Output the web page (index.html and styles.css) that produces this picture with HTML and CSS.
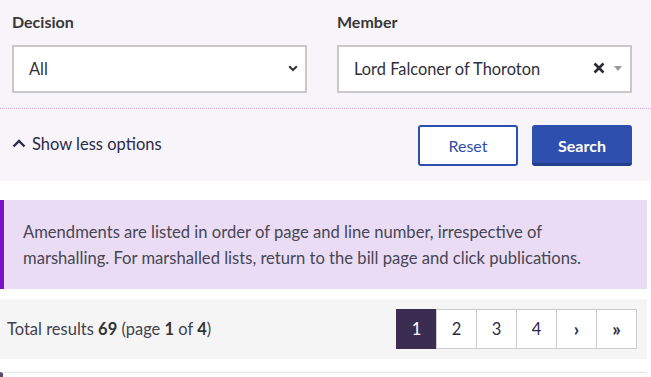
FILE: index.html
```html
<!DOCTYPE html>
<html lang="en">
<head>
<meta charset="utf-8">
<title>Amendments search</title>
<link rel="stylesheet" href="styles.css">
</head>
<body>
<section class="filters">
  <div class="fields">
    <div class="field">
      <div class="label">Decision</div>
      <div class="select">
        <span class="value">All</span>
        <svg class="chev" width="10" height="7" viewBox="0 0 10 7"><path d="M1.2 1.2 L5 5 L8.8 1.2" fill="none" stroke="#333" stroke-width="2"/></svg>
      </div>
    </div>
    <div class="field">
      <div class="label">Member</div>
      <div class="select">
        <span class="value">Lord Falconer of Thoroton</span>
        <span class="icons">
          <svg width="12" height="12" viewBox="0 0 12 12"><path d="M1.5 1.5 L10.5 10.5 M10.5 1.5 L1.5 10.5" stroke="#2b2b33" stroke-width="2.6"/></svg>
          <svg width="8" height="5" viewBox="0 0 8 5"><path d="M0 0 H8 L4 5 Z" fill="#999"/></svg>
        </span>
      </div>
    </div>
  </div>
  <div class="actions">
    <a class="toggle" href="#">
      <svg width="14" height="9" viewBox="0 0 14 9"><path d="M1.5 7.5 L7 2 L12.5 7.5" fill="none" stroke="#2b2a48" stroke-width="2.4"/></svg>
      Show less options
    </a>
    <div class="buttons">
      <button class="btn btn-outline">Reset</button>
      <button class="btn btn-primary">Search</button>
    </div>
  </div>
</section>

<div class="notice">
  Amendments are listed in order of page and line number, irrespective of marshalling. For marshalled lists, return to the bill page and click publications.
</div>

<div class="results">
  <div class="total">Total results <b>69</b> (page <b>1</b> of <b>4</b>)</div>
  <nav class="pager">
    <span class="page active">1</span>
    <span class="page">2</span>
    <span class="page">3</span>
    <span class="page">4</span>
    <span class="page arrow">›</span>
    <span class="page arrow">»</span>
  </nav>
</div>

<div class="card"></div>
</body>
</html>
```
FILE: styles.css
```css
* { box-sizing: border-box; }
html, body { margin: 0; padding: 0; background: #fff; }
body {
  font-family: "Lato", "Open Sans", sans-serif;
  color: #3a3a46;
  width: 651px;
  overflow: hidden;
}
.filters {
  background: #f7f5fa;
  height: 181px;
}
.fields {
  display: grid;
  grid-template-columns: 295px 295px;
  column-gap: 30px;
  padding: 12px 0 0 12px;
  height: 108px;
}
.label {
  font-weight: 700;
  font-size: 16px;
  line-height: 20px;
  color: #383838;
  margin-bottom: 13px;
}
.select {
  height: 48px;
  background: #fff;
  border: 2px solid #c8c8c8;
  display: flex;
  align-items: center;
  justify-content: space-between;
  padding: 0 6px 2px 15px;
  font-size: 16.4px;
  color: #2f2f3a;
}
.chev { margin-right: 1px; }
.icons { display: flex; align-items: center; gap: 9px; margin-right: 2px; }
.actions {
  border-top: 1px dotted #d5a6e6;
  display: flex;
  justify-content: space-between;
  align-items: center;
  padding: 15px 19px 15px 12px;
  height: 73px;
}
.toggle {
  display: flex;
  align-items: center;
  gap: 6px;
  font-size: 16.5px;
  color: #2b2a48;
  text-decoration: none;
  margin-top: -3px;
}
.buttons { display: flex; gap: 14px; }
.btn {
  width: 100px;
  height: 41px;
  border-radius: 3px;
  font-family: "Lato", sans-serif;
  font-size: 16px;
  cursor: pointer;
  padding: 0;
}
.btn-outline {
  background: #fff;
  border: 2px solid #2e4fae;
  color: #2e4fae;
}
.btn-primary {
  background: #2e4fae;
  border: 0;
  border-bottom: 3px solid #223f8c;
  color: #fff;
  font-weight: 700;
  padding-top: 3px;
}
.notice {
  margin-top: 19px;
  width: 647px;
  background: #ebdcf5;
  border-left: 4px solid #7b10c4;
  padding: 19px 40px 18px 19px;
  font-size: 16.6px;
  line-height: 26px;
  color: #464654;
}
.results {
  margin-top: 10px;
  width: 647px;
  height: 60px;
  background: #f5f5f5;
  display: flex;
  align-items: center;
  justify-content: space-between;
  padding: 0 10px 0 7px;
}
.total { font-size: 16.5px; color: #42424e; }
.total b { color: #333; }
.pager { display: flex; padding-left: 1px; }
.page {
  width: 41px;
  height: 40px;
  display: flex;
  align-items: center;
  justify-content: center;
  background: #fff;
  border: 1px solid #cccccc;
  margin-left: -1px;
  font-size: 16.5px;
  color: #2b2a48;
}
.page.arrow { font-size: 19px; font-weight: 700; padding-bottom: 2px; }
.page.active { background: #3b2d52; border-color: #3b2d52; color: #fff; }
.card {
  margin-top: 13px;
  width: 646px;
  height: 20px;
  border-top: 1px solid #e8e8e8;
  border-left: 3px solid #5b4b73;
  box-shadow: 0 0 2px rgba(0,0,0,0.08);
}
```
